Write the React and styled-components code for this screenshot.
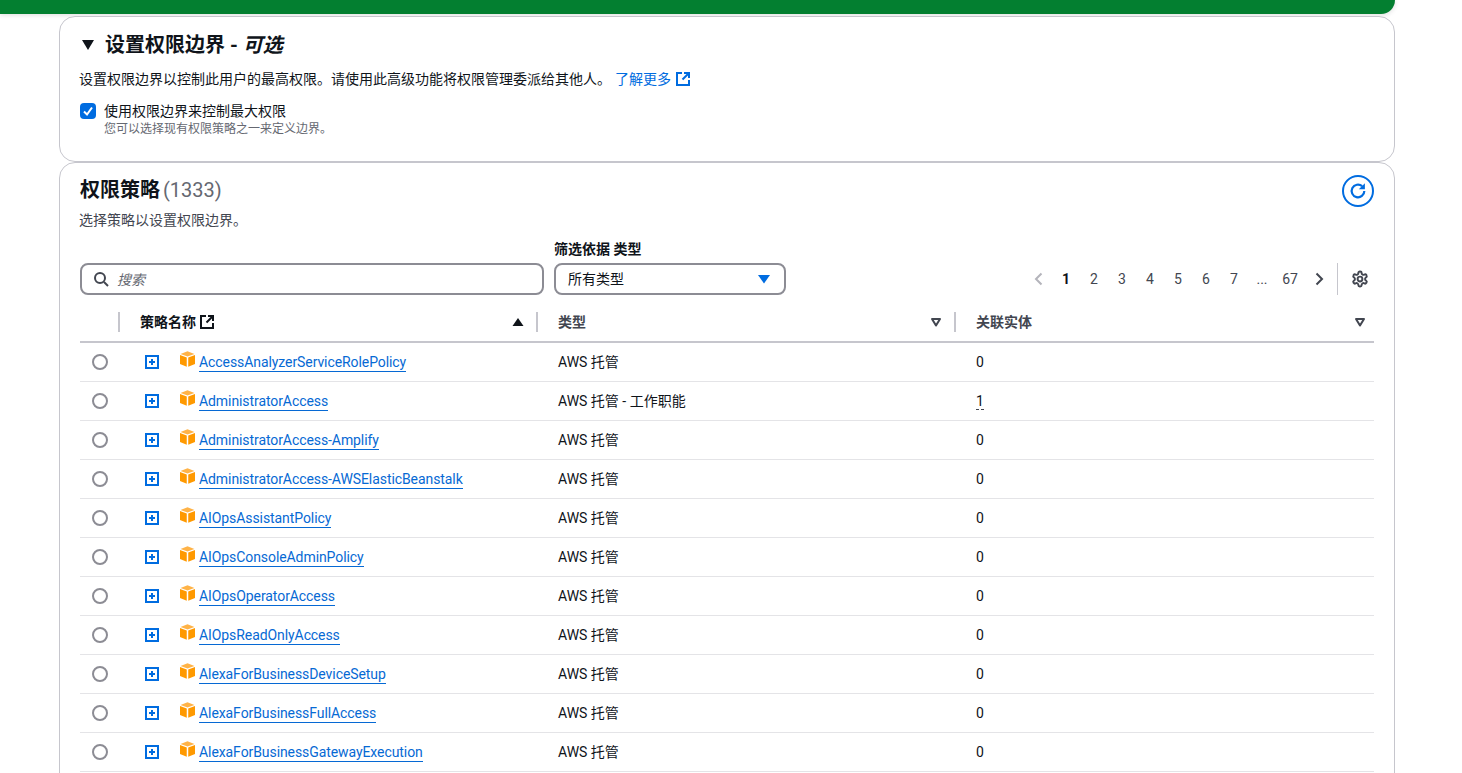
import React from "react";
import styled, { createGlobalStyle } from "styled-components";

const Global = createGlobalStyle`
  html, body { margin: 0; padding: 0; background: #fff; height: 773px; overflow: hidden; }
  body { font-family: Roboto, "Noto Sans CJK SC", sans-serif; font-size: 14px; color: #0f141a; }
  * { box-sizing: border-box; }
`;
const Page = styled.div`display:flex;flex-direction:column;height:773px;overflow:hidden;`;
const Banner = styled.div`width:1395px;height:14px;flex:none;background:#037f30;border-bottom-right-radius:14px;box-shadow:0 1px 5px rgba(0,0,0,.14);`;
const Content = styled.div`width:1336px;margin:2px 0 0 59px;display:flex;flex-direction:column;`;
const Card = styled.section`
  border:1px solid #c6c6cd;border-radius:16px;background:#fff;padding:0 20px;
`;
const BoundaryCard = styled(Card)`height:146px;padding-top:15px;`;
const TableCard = styled(Card)`height:700px;padding-top:12px;`;
const SectionTitle = styled.h2`margin:0;display:flex;align-items:center;gap:9px;font-size:20px;line-height:26px;font-weight:700;`;
const Caret = styled.svg`width:16px;height:16px;flex:none;`;
const Desc = styled.p`margin:11px 0 0 -1px;font-size:14px;line-height:20px;display:flex;align-items:center;`;
const LearnLink = styled.a`color:#006ce0;margin-left:4px;display:inline-flex;align-items:center;gap:5px;`;
const CheckRow = styled.div`display:flex;gap:8px;margin-top:12px;`;
const CheckBox = styled.span`width:16px;height:16px;margin-top:2px;border-radius:4px;background:#006ce0;display:flex;align-items:center;justify-content:center;flex:none;`;
const CheckLabel = styled.div`font-size:14px;line-height:20px;`;
const CheckHint = styled.div`font-size:12px;line-height:16px;color:#656871;`;
const TitleRow = styled.div`display:flex;justify-content:space-between;align-items:flex-start;`;
const TableTitle = styled.h2`margin:0;font-size:20px;line-height:30px;font-weight:700;`;
const Count = styled.span`font-weight:400;color:#656871;margin-left:-2px;`;
const RefreshButton = styled.span`width:32px;height:32px;border:2px solid #006ce0;border-radius:50%;display:flex;align-items:center;justify-content:center;`;
const Subtitle = styled.div`font-size:14px;line-height:20px;margin:3px 0 0 -1px;color:#424650;`;
const Controls = styled.div`display:flex;align-items:flex-end;margin-top:11px;height:54px;`;
const SearchBox = styled.div`width:464px;height:32px;border:2px solid #8c8c94;border-radius:8px;display:flex;align-items:center;gap:8px;padding:0 11px;color:#656871;font-style:italic;`;
const FilterGroup = styled.div`margin-left:10px;width:232px;`;
const FilterLabel = styled.div`font-size:14px;line-height:20px;font-weight:700;margin-bottom:4px;`;
const Select = styled.div`height:32px;border:2px solid #8c8c94;border-radius:8px;display:flex;align-items:center;justify-content:space-between;padding:0 13px 0 12px;`;
const SelectValue = styled.span`margin-bottom:2px;`;
const Pager = styled.div`margin-left:auto;display:flex;align-items:center;height:32px;padding-right:5px;color:#424650;`;
const PageNum = styled.span`width:28px;text-align:center;font-size:14px;font-weight:${p => (p.$active ? 700 : 400)};color:${p => (p.$active ? "#0f141a" : "#424650")};`;
const PagerIcon = styled.span`width:${p => p.$w}px;display:flex;justify-content:center;`;
const PagerSplit = styled.span`width:1px;height:32px;background:#c6c6cd;margin:0 13px 0 4px;`;
const Table = styled.div`display:flex;flex-direction:column;margin-top:8px;`;
const HeaderRow = styled.div`display:grid;grid-template-columns:38px 418px 418px 420px;height:40px;border-bottom:2px solid #c6c6cd;align-items:center;`;
const HeadCell = styled.div`height:20px;border-left:${p => (p.$plain ? "0" : "2px solid #c6c6cd")};padding:0 ${p => (p.$last ? 8 : 12)}px 0 20px;display:flex;align-items:center;justify-content:space-between;font-size:14px;font-weight:700;color:${p => (p.$dim ? "#424650" : "#0f141a")};`;
const HeadLabel = styled.span`display:inline-flex;align-items:center;gap:4px;`;
const HeadText = styled.span`margin-bottom:2px;`;
const Row = styled.div`display:grid;grid-template-columns:39px 418px 418px 419px;height:39px;border-bottom:1px solid #e4e4e7;align-items:center;`;
const RadioCell = styled.div`display:flex;justify-content:center;padding-left:1px;`;
const Radio = styled.span`width:16px;height:16px;border:2px solid #8c8c94;border-radius:50%;`;
const NameCell = styled.div`display:flex;align-items:center;padding-left:26px;`;
const Plus = styled.svg`width:14px;height:14px;flex:none;`;
const Cube = styled.svg`width:15px;height:16px;flex:none;margin:-7px 4px 0 21px;`;
const PolicyLink = styled.a`color:#0669d4;border-bottom:1px solid #0669d4;line-height:18px;margin-top:1px;letter-spacing:-0.08px;`;
const TypeCell = styled.div`padding:0 0 2px 21px;`;
const CountCell = styled.div`padding-left:21px;`;
const Underlined = styled.span`border-bottom:1px dashed #424650;line-height:16px;display:inline-block;`;

const External = ({ color }) => (
  <svg width="14" height="14" viewBox="0 0 14 14" fill="none" stroke={color} strokeWidth="2">
    <path d="M6 1H1v12h12V8" /><path d="M8 1h5v5" /><path d="M13 1 6.5 7.5" />
  </svg>
);
const Sort = () => (
  <svg width="12" height="12" viewBox="0 0 12 12" fill="none" stroke="#424650" strokeWidth="2" strokeLinejoin="round"><path d="M2 3h8L6 9.5z" /></svg>
);

const policies = [
  ["AccessAnalyzerServiceRolePolicy", "AWS 托管", "0"],
  ["AdministratorAccess", "AWS 托管 - 工作职能", "1"],
  ["AdministratorAccess-Amplify", "AWS 托管", "0"],
  ["AdministratorAccess-AWSElasticBeanstalk", "AWS 托管", "0"],
  ["AIOpsAssistantPolicy", "AWS 托管", "0"],
  ["AIOpsConsoleAdminPolicy", "AWS 托管", "0"],
  ["AIOpsOperatorAccess", "AWS 托管", "0"],
  ["AIOpsReadOnlyAccess", "AWS 托管", "0"],
  ["AlexaForBusinessDeviceSetup", "AWS 托管", "0"],
  ["AlexaForBusinessFullAccess", "AWS 托管", "0"],
  ["AlexaForBusinessGatewayExecution", "AWS 托管", "0"],
];

export default function App() {
  return (
    <Page>
      <Global />
      <Banner />
      <Content>
        <BoundaryCard>
          <SectionTitle>
            <Caret viewBox="0 0 16 16"><path d="M2 3h12l-6 10z" fill="#0f141a" /></Caret>
            <span>设置权限边界 - <em>可选</em></span>
          </SectionTitle>
          <Desc>
            设置权限边界以控制此用户的最高权限。请使用此高级功能将权限管理委派给其他人。
            <LearnLink>了解更多<External color="#006ce0" /></LearnLink>
          </Desc>
          <CheckRow>
            <CheckBox>
              <svg width="12" height="12" viewBox="0 0 12 12" fill="none" stroke="#fff" strokeWidth="2"><path d="M2 6.5 5 9.5 10 2.5" /></svg>
            </CheckBox>
            <div>
              <CheckLabel>使用权限边界来控制最大权限</CheckLabel>
              <CheckHint>您可以选择现有权限策略之一来定义边界。</CheckHint>
            </div>
          </CheckRow>
        </BoundaryCard>
        <TableCard>
          <TitleRow>
            <TableTitle>权限策略 <Count>(1333)</Count></TableTitle>
            <RefreshButton>
              <svg width="22" height="22" viewBox="0 0 16 16" fill="none">
                <path d="M12.6 8a4.6 4.6 0 1 1-1.6-3.5" stroke="#006ce0" strokeWidth="1.6" />
                <path d="M13 2.4v4.4H8.6z" fill="#006ce0" />
              </svg>
            </RefreshButton>
          </TitleRow>
          <Subtitle>选择策略以设置权限边界。</Subtitle>
          <Controls>
            <SearchBox>
              <svg width="16" height="16" viewBox="0 0 16 16" fill="none" stroke="#424650" strokeWidth="2"><circle cx="7" cy="7" r="5" /><path d="m11 11 4 4" /></svg>
              搜索
            </SearchBox>
            <FilterGroup>
              <FilterLabel>筛选依据 类型</FilterLabel>
              <Select>
                <SelectValue>所有类型</SelectValue>
                <svg width="14" height="10" viewBox="0 0 14 10"><path d="M1 1h12L7 9.5z" fill="#006ce0" /></svg>
              </Select>
            </FilterGroup>
            <Pager>
              <PagerIcon $w={27}><svg width="14" height="14" viewBox="0 0 14 14" fill="none" stroke="#b4b4bb" strokeWidth="2"><path d="M9.5 1.5 4 7l5.5 5.5" /></svg></PagerIcon>
              <PageNum $active>1</PageNum>
              {["2", "3", "4", "5", "6", "7", "...", "67"].map(n => <PageNum key={n}>{n}</PageNum>)}
              <PagerIcon $w={29}><svg width="14" height="14" viewBox="0 0 14 14" fill="none" stroke="#424650" strokeWidth="2"><path d="M4.5 1.5 10 7l-5.5 5.5" /></svg></PagerIcon>
              <PagerSplit />
              <svg width="18" height="18" viewBox="0 0 24 24" fill="none" stroke="#424650" strokeWidth="2.6" strokeLinejoin="round"><circle cx="12" cy="12" r="3.2" /><path d="M12.2 2h-.4a2 2 0 0 0-2 2v.2a2 2 0 0 1-1 1.7l-.4.3a2 2 0 0 1-2 0l-.2-.1a2 2 0 0 0-2.7.7l-.2.4a2 2 0 0 0 .7 2.7l.2.1a2 2 0 0 1 1 1.7v.5a2 2 0 0 1-1 1.7l-.2.1a2 2 0 0 0-.7 2.7l.2.4a2 2 0 0 0 2.7.7l.2-.1a2 2 0 0 1 2 0l.4.3a2 2 0 0 1 1 1.7v.2a2 2 0 0 0 2 2h.4a2 2 0 0 0 2-2v-.2a2 2 0 0 1 1-1.7l.4-.3a2 2 0 0 1 2 0l.2.1a2 2 0 0 0 2.7-.7l.2-.4a2 2 0 0 0-.7-2.7l-.2-.1a2 2 0 0 1-1-1.7v-.5a2 2 0 0 1 1-1.7l.2-.1a2 2 0 0 0 .7-2.7l-.2-.4a2 2 0 0 0-2.7-.7l-.2.1a2 2 0 0 1-2 0l-.4-.3a2 2 0 0 1-1-1.7V4a2 2 0 0 0-2-2z" /></svg>
            </Pager>
          </Controls>
          <Table>
            <HeaderRow>
              <HeadCell $plain />
              <HeadCell>
                <HeadLabel><HeadText>策略名称</HeadText><External color="#0f141a" /></HeadLabel>
                <svg width="12" height="10" viewBox="0 0 12 10"><path d="M6 1l5.5 8H.5z" fill="#0f141a" /></svg>
              </HeadCell>
              <HeadCell $dim><HeadText>类型</HeadText><Sort /></HeadCell>
              <HeadCell $dim $last><HeadText>关联实体</HeadText><Sort /></HeadCell>
            </HeaderRow>
            {policies.map(([name, type, count]) => (
              <Row key={name}>
                <RadioCell><Radio /></RadioCell>
                <NameCell>
                  <Plus viewBox="0 0 14 14" fill="none"><rect x="1" y="1" width="12" height="12" stroke="#006ce0" strokeWidth="2" /><path d="M7 4v6M4 7h6" stroke="#006ce0" strokeWidth="2" /></Plus>
                  <Cube viewBox="1 0.5 14 14.5"><path d="M8 .5 14.5 3 8 5.5 1.5 3z" fill="#ffb347" /><path d="M1 4l6.3 2.4V15L1 12.5z" fill="#f90" /><path d="M15 4 8.7 6.4V15l6.3-2.5z" fill="#f90" /></Cube>
                  <PolicyLink>{name}</PolicyLink>
                </NameCell>
                <TypeCell>{type}</TypeCell>
                <CountCell>{count === "1" ? <Underlined>{count}</Underlined> : count}</CountCell>
              </Row>
            ))}
          </Table>
        </TableCard>
      </Content>
    </Page>
  );
}
